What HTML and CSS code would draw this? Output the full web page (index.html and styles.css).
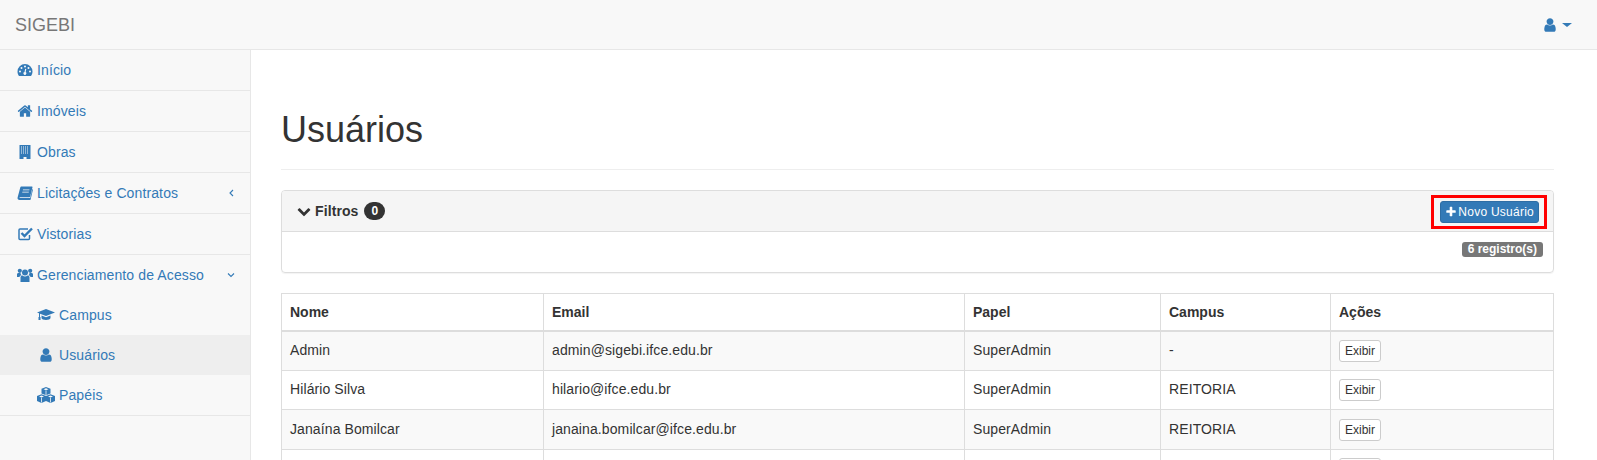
FILE: index.html
```html
<!DOCTYPE html>
<html lang="pt">
<head>
<meta charset="utf-8">
<title>SIGEBI</title>
<link rel="stylesheet" href="styles.css">
</head>
<body>
<header class="navbar">
  <span class="brand">SIGEBI</span>
  <span class="user-menu">
    <svg class="ico" viewBox="0 0 1792 1792"><path d="M1536 1399q0 109-62.5 187t-150.5 78h-854q-88 0-150.5-78t-62.5-187q0-85 8.5-160.5t31.5-152 58.5-131 94-89 134.5-34.5q131 128 313 128t313-128q76 0 134.5 34.5t94 89 58.5 131 31.5 152 8.5 160.5zm-256-887q0 159-112.5 271.5t-271.5 112.5-271.5-112.5-112.5-271.5 112.5-271.5 271.5-112.5 271.5 112.5 112.5 271.5z"/></svg>
    <span class="caret"></span>
  </span>
</header>
<div class="layout">
  <nav class="sidebar">
    <a class="item"><svg class="ico" viewBox="0 0 16 16"><path fill-rule="evenodd" d="M8 2a7.5 7.5 0 0 0-7.5 7.5c0 1.6.5 3.1 1.3 4.3.1.2.3.2.5.2h11.4c.2 0 .4 0 .5-.2.8-1.2 1.3-2.7 1.3-4.3A7.5 7.5 0 0 0 8 2zM8 3.5a1 1 0 1 1 0 2 1 1 0 0 1 0-2zM4.5 5a1 1 0 1 1 0 2 1 1 0 0 1 0-2zM11.5 5a1 1 0 1 1 0 2 1 1 0 0 1 0-2zM3 8.5a1 1 0 1 1 0 2 1 1 0 0 1 0-2zM13 8.5a1 1 0 1 1 0 2 1 1 0 0 1 0-2zM9.3 7 8.7 10.1a1.5 1.5 0 1 1-1.2-.2L8.2 6.8z"/></svg>Início</a>
    <a class="item"><svg class="ico" viewBox="0 0 1792 1792"><path d="M1472 992v480q0 26-19 45t-45 19h-384v-384h-256v384h-384q-26 0-45-19t-19-45v-480q0-1 .5-3t.5-3l575-474 575 474q1 2 1 6zm223-69l-62 74q-8 9-21 11h-3q-13 0-21-7l-692-577-692 577q-12 8-24 7-13-2-21-11l-62-74q-8-10-7-23.5t11-21.5l719-599q32-26 76-26t76 26l244 204v-195q0-14 9-23t23-9h192q14 0 23 9t9 23v408l219 182q10 8 11 21.5t-7 23.5z"/></svg>Imóveis</a>
    <a class="item"><svg class="ico" viewBox="0 0 16 16"><path fill-rule="evenodd" d="M2.5 1h11v14H9.5v-2h-3v2h-4zM4 2.5v1h1v-1zM6 2.5v1h1v-1zM8 2.5v1h1v-1zM10 2.5v1h1v-1zM4 4.5v1h1v-1zM6 4.5v1h1v-1zM8 4.5v1h1v-1zM10 4.5v1h1v-1zM4 6.5v1h1v-1zM6 6.5v1h1v-1zM8 6.5v1h1v-1zM10 6.5v1h1v-1zM4 8.5v1h1v-1zM6 8.5v1h1v-1zM8 8.5v1h1v-1zM10 8.5v1h1v-1z"/></svg>Obras</a>
    <a class="item"><svg class="ico" viewBox="0 0 16 16"><path d="M4.5 1.5H15c.4 0 .6.3.5.7l-2.3 9.3c-.1.5-.4.7-.9.7H3.2c-.8 0-1.1.8-.4.9h10.4l2.2-9 .6.5-2.4 9.8c-.1.4-.4.6-.8.6H2.5C1.2 15 .2 13.9.6 12.5L3.2 2.8c.2-.8.6-1.3 1.3-1.3z"/><path fill="#f8f8f8" d="M6 4.5h6.5l-.2.8H5.800zM5.4 6.7h6.5l-.2.8H5.200z"/></svg>Licitações e Contratos<svg class="arrow" viewBox="0 0 8 12"><path d="M6 3 3 6l3 3"/></svg></a>
    <a class="item"><svg class="ico" viewBox="0 0 16 16"><path d="M12.5 9v3.5a1 1 0 0 1-1 1H3a1 1 0 0 1-1-1V4a1 1 0 0 1 1-1h8" fill="none" stroke="#337ab7" stroke-width="1.5"/><path d="M4.5 7 7.5 10 15 2.5" fill="none" stroke="#337ab7" stroke-width="2.4"/></svg>Vistorias</a>
    <div class="group">
      <a class="item-head"><svg class="ico" viewBox="0 0 16 16"><circle cx="8" cy="5.5" r="3"/><circle cx="2.8" cy="3.8" r="2.1"/><circle cx="13.2" cy="3.8" r="2.1"/><path d="M3.5 15v-4.500C3.500 9 4.500 8.500 5.500 8.500c.8.700 1.500 1 2.500 1s1.700-.3 2.500-1c1 0 2 .5 2 2V15zM0 10V7.500C0 6.500.6 6 1.500 6h2c.1 1 .4 1.600 1 2.200C3.500 8.400 2.600 9 2.500 10zM16 10V7.500c0-1-.6-1.500-1.500-1.500h-2c-.1 1-.4 1.600-1 2.200 1 .2 1.900.8 2 1.800z"/></svg>Gerenciamento de Acesso<svg class="arrow" viewBox="0 0 12 8"><path d="M3 2.5 6 5.5l3-3"/></svg></a>
      <a class="sub"><svg class="ico" viewBox="0 0 18 16"><path d="M9 2 0 5.5l2 .8V10H1.5v3h2v-3H3V6.7L9 9l9-3.500z"/><path d="M4.5 8.5V11c0 1 2.200 2 4.500 2s4.500-1 4.500-2V8.500L9 10.200z"/></svg>Campus</a>
      <a class="sub active"><svg class="ico" viewBox="0 0 1792 1792"><path d="M1536 1399q0 109-62.5 187t-150.5 78h-854q-88 0-150.5-78t-62.5-187q0-85 8.5-160.5t31.5-152 58.5-131 94-89 134.5-34.5q131 128 313 128t313-128q76 0 134.5 34.5t94 89 58.5 131 31.5 152 8.5 160.5zm-256-887q0 159-112.5 271.5t-271.5 112.5-271.5-112.5-112.5-271.5 112.5-271.5 271.5-112.5 271.5 112.5 112.5 271.5z"/></svg>Usuários</a>
      <a class="sub"><svg class="ico" viewBox="0 0 18 16"><path fill-rule="evenodd" d="M9 0 4.5 1.8v4.7L9 8.3l4.5-1.8V1.800zM9 1.3 6.5 2.3 9 3.3l2.500-1zM4.500 7.200 0 9v5l4.500 2L9 14V9zM4.500 8.500 2 9.500l2.500 1 2.500-1zM13.500 7.200 9 9v5l4.500 2 4.500-2V9zM13.500 8.500l-2.500 1 2.500 1 2.500-1z"/><path d="M9 3.5v4.500M4.500 10.700V15.500M13.500 10.700V15.500" fill="none" stroke="#f8f8f8" stroke-width=".8"/></svg>Papéis</a>
    </div>
  </nav>
  <main class="main">
    <h1 class="page-header">Usuários</h1>
    <section class="panel">
      <div class="panel-heading">
        <span class="filter-title">
          <svg class="chev" viewBox="0 0 1792 1792"><path d="M1683 808l-742 741q-19 19-45 19t-45-19l-742-741q-19-19-19-45.5t19-45.5l166-165q19-19 45-19t45 19l531 531 531-531q19-19 45-19t45 19l166 165q19 19 19 45.5t-19 45.5z"/></svg>
          Filtros <span class="badge">0</span>
        </span>
        <span class="highlight">
          <button class="btn-primary"><svg class="plus" viewBox="0 0 1792 1792"><path d="M1600 736v192q0 40-28 68t-68 28h-416v416q0 40-28 68t-68 28h-192q-40 0-68-28t-28-68v-416h-416q-40 0-68-28t-28-68v-192q0-40 28-68t68-28h416v-416q0-40 28-68t68-28h192q40 0 68 28t28 68v416h416q40 0 68 28t28 68z"/></svg>Novo Usuário</button>
        </span>
      </div>
      <div class="panel-body"><span class="label">6 registro(s)</span></div>
    </section>
    <table class="table">
      <colgroup>
        <col class="c1"><col class="c2"><col class="c3"><col class="c4"><col class="c5">
      </colgroup>
      <thead>
        <tr><th>Nome</th><th>Email</th><th>Papel</th><th>Campus</th><th>Ações</th></tr>
      </thead>
      <tbody>
        <tr><td>Admin</td><td>admin@sigebi.ifce.edu.br</td><td>SuperAdmin</td><td>-</td><td><button class="btn-xs">Exibir</button></td></tr>
        <tr><td>Hilário Silva</td><td>hilario@ifce.edu.br</td><td>SuperAdmin</td><td>REITORIA</td><td><button class="btn-xs">Exibir</button></td></tr>
        <tr class="row-tall"><td>Janaína Bomilcar</td><td>janaina.bomilcar@ifce.edu.br</td><td>SuperAdmin</td><td>REITORIA</td><td><button class="btn-xs">Exibir</button></td></tr>
        <tr><td>&nbsp;</td><td>&nbsp;</td><td>&nbsp;</td><td>&nbsp;</td><td><button class="btn-xs">Exibir</button></td></tr>
      </tbody>
    </table>
  </main>
</div>
</body>
</html>
```
FILE: styles.css
```css
* { box-sizing: border-box; }
html, body { margin: 0; height: 460px; overflow: hidden; }
body {
  font-family: "Liberation Sans", Arial, sans-serif;
  font-size: 14px;
  line-height: 20px;
  color: #333;
  background: #fff;
}
.navbar {
  height: 50px;
  background: #f8f8f8;
  border-bottom: 1px solid #e7e7e7;
  display: flex;
  align-items: center;
  justify-content: space-between;
  padding: 0 25px 0 15px;
}
.brand { font-size: 18px; color: #777; }
.user-menu { display: flex; align-items: center; gap: 4px; color: #337ab7; }
.ico { width: 16px; height: 16px; fill: #337ab7; flex: none; }
.caret {
  width: 0; height: 0;
  border-top: 4px solid #337ab7;
  border-left: 5px solid transparent;
  border-right: 5px solid transparent;
}
.layout { display: flex; height: 410px; }
.sidebar {
  width: 251px;
  flex: none;
  background: #f8f8f8;
  border-right: 1px solid #e7e7e7;
  letter-spacing: .12px;
}
.item, .item-head, .sub {
  display: flex;
  align-items: center;
  color: #337ab7;
  height: 41px;
  padding-left: 17px;
  gap: 4px;
}
.item { border-bottom: 1px solid #e7e7e7; }
.item-head { height: 40px; }
.sub { height: 40px; padding-left: 37px; }
.sub .ico { width: 18px; }
.sub.active { background: #eee; }
.group { border-bottom: 1px solid #e7e7e7; }
.arrow {
  width: 12px; height: 12px;
  margin-left: auto;
  margin-right: 13px;
  fill: none;
  stroke: #337ab7;
  stroke-width: 1.1;
}
.main { flex: 1; padding: 0 43px 0 30px; min-width: 0; }
.page-header {
  margin: 60px 0 20px;
  padding-bottom: 19px;
  border-bottom: 1px solid #eee;
  font-size: 36px;
  font-weight: 500;
  line-height: 40px;
  color: #333;
}
.panel {
  height: 83px;
  border: 1px solid #ddd;
  border-radius: 4px;
  box-shadow: 0 1px 1px rgba(0,0,0,.05);
  margin-bottom: 20px;
}
.panel-heading {
  height: 41px;
  background: #f5f5f5;
  border-bottom: 1px solid #ddd;
  border-radius: 3px 3px 0 0;
  display: flex;
  align-items: center;
  justify-content: space-between;
  padding: 0 6px 0 15px;
}
.filter-title { display: flex; align-items: center; gap: 4px; font-weight: 700; letter-spacing: .1px; }
.chev { width: 14px; height: 14px; fill: #333; }
.badge {
  background: #333;
  color: #fff;
  font-size: 12px;
  line-height: 12px;
  margin-left: 2px;
  padding: 3px 7px;
  border-radius: 10px;
}
.highlight {
  border: 3px solid #f00;
  padding: 3px 5px 3px 6px;
  margin-top: 2px;
  display: flex;
}
.btn-primary {
  background: #337ab7;
  border: 1px solid #2e6da4;
  border-radius: 3px;
  color: #fff;
  font: 12px/18px "Liberation Sans", Arial, sans-serif;
  letter-spacing: .25px;
  white-space: nowrap;
  height: 22px;
  padding: 0 4px;
  display: flex;
  align-items: center;
  gap: 1px;
}
.plus { width: 12px; height: 12px; fill: #fff; }
.panel-body { display: flex; justify-content: flex-end; padding: 10px 10px 0; }
.label {
  background: #777;
  color: #fff;
  font-size: 12px;
  font-weight: 700;
  line-height: 12px;
  padding: 1px 6px 2px;
  border-radius: 3px;
}
.table { width: 100%; border-collapse: collapse; table-layout: fixed; }
.c1 { width: 262px; }
.c2 { width: 421px; }
.c3 { width: 196px; }
.c4 { width: 170px; }
.table th, .table td {
  border: 1px solid #ddd;
  padding: 8px;
  text-align: left;
  vertical-align: top;
}
.table td { letter-spacing: .1px; }
.table th { border-bottom-width: 2px; }
.table tbody tr:nth-child(odd) { background: #f9f9f9; }
.table .row-tall td { padding-top: 9px; }
.btn-xs {
  background: #fff;
  border: 1px solid #ccc;
  border-radius: 3px;
  color: #333;
  font: 12px/18px "Liberation Sans", Arial, sans-serif;
  height: 22px;
  padding: 0 5px;
  display: block;
}
```
